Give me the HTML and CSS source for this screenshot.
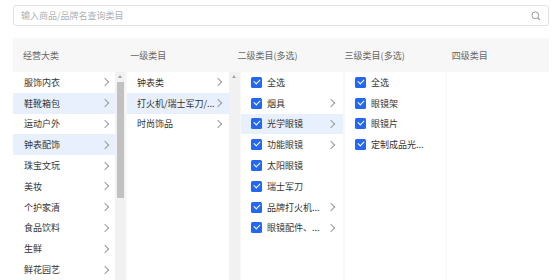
FILE: index.html
```html
<!DOCTYPE html>
<html>
<head>
<meta charset="utf-8">
<link rel="stylesheet" href="styles.css">
</head>
<body>
<div class="wrap">
  <div class="search">
    <span class="ph">输入商品/品牌名查询类目</span>
    <svg class="sicon" width="10" height="10" viewBox="0 0 10 10"><circle cx="4.3" cy="4.3" r="3.4" fill="none" stroke="#999" stroke-width="1"/><path d="M6.8 6.8 L9 9" stroke="#999" stroke-width="1.1"/></svg>
  </div>
  <div class="panel">
    <div class="heads">
      <div class="h">经营大类</div>
      <div class="h">一级类目</div>
      <div class="h">二级类目(多选)</div>
      <div class="h">三级类目(多选)</div>
      <div class="h">四级类目</div>
    </div>
    <div class="cols">
      <div class="col c1">
        <div class="row"><span class="t">服饰内衣</span><i class="chev"></i></div>
        <div class="row on"><span class="t">鞋靴箱包</span><i class="chev"></i></div>
        <div class="row"><span class="t">运动户外</span><i class="chev"></i></div>
        <div class="row on"><span class="t">钟表配饰</span><i class="chev"></i></div>
        <div class="row"><span class="t">珠宝文玩</span><i class="chev"></i></div>
        <div class="row"><span class="t">美妆</span><i class="chev"></i></div>
        <div class="row"><span class="t">个护家清</span><i class="chev"></i></div>
        <div class="row"><span class="t">食品饮料</span><i class="chev"></i></div>
        <div class="row"><span class="t">生鲜</span><i class="chev"></i></div>
        <div class="row"><span class="t">鲜花园艺</span><i class="chev"></i></div>
      </div>
      <div class="sb sb1"><i class="up"></i><div class="thumb"></div></div>
      <div class="col c2">
        <div class="row"><span class="t">钟表类</span><i class="chev"></i></div>
        <div class="row on"><span class="t">打火机/瑞士军刀/...</span><i class="chev"></i></div>
        <div class="row"><span class="t">时尚饰品</span><i class="chev"></i></div>
      </div>
      <div class="sb sb2"><i class="up"></i></div>
      <div class="col c3">
        <div class="row"><i class="cb"></i><span class="t">全选</span></div>
        <div class="row"><i class="cb"></i><span class="t">烟具</span><i class="chev"></i></div>
        <div class="row on"><i class="cb"></i><span class="t">光学眼镜</span><i class="chev"></i></div>
        <div class="row"><i class="cb"></i><span class="t">功能眼镜</span><i class="chev"></i></div>
        <div class="row"><i class="cb"></i><span class="t">太阳眼镜</span></div>
        <div class="row"><i class="cb"></i><span class="t">瑞士军刀</span></div>
        <div class="row"><i class="cb"></i><span class="t">品牌打火机...</span><i class="chev"></i></div>
        <div class="row"><i class="cb"></i><span class="t">眼镜配件、...</span><i class="chev"></i></div>
      </div>
      <div class="col c4">
        <div class="row"><i class="cb"></i><span class="t">全选</span></div>
        <div class="row"><i class="cb"></i><span class="t">眼镜架</span></div>
        <div class="row"><i class="cb"></i><span class="t">眼镜片</span></div>
        <div class="row"><i class="cb"></i><span class="t">定制成品光...</span></div>
      </div>
      <div class="col c5"></div>
    </div>
  </div>
</div>
</body>
</html>
```

FILE: styles.css
```css
html, body {
  margin: 0;
  padding: 0;
  overflow: hidden;
  background: #fff;
}
body {
  font-family: "Noto Sans CJK SC", "Noto Sans", sans-serif;
  font-size: 9px;
  color: #333;
}
.wrap {
  padding: 5px 4px 0 13px;
}
.search {
  height: 19px;
  border: 1px solid #e2e2e2;
  border-radius: 3px;
  display: flex;
  align-items: center;
  justify-content: space-between;
  padding: 0 7px 0 7px;
}
.ph {
  color: #b0b0b0;
  font-size: 9px;
}
.sicon {
  display: block;
}
.panel {
  margin-top: 12px;
  background: #f7f7f7;
}
.heads {
  height: 34px;
  display: grid;
  grid-template-columns: repeat(5, 1fr);
  align-items: center;
}
.h {
  padding-left: 10px;
  color: #666;
  padding-top: 1px;
}
.cols {
  display: flex;
  height: 220px;
  align-items: stretch;
}
.col {
  background: #fff;
  overflow: hidden;
}
.c1 { width: 102px; }
.c2 { width: 102px; margin-left: 2px; }
.c3 { width: 102px; margin-left: 1px; }
.c4 { width: 101px; margin-left: 2px; }
.c5 { width: 102px; margin-left: 1px; }
.row {
  height: 20.8px;
  display: flex;
  align-items: center;
  padding-left: 11px;
  padding-right: 5px;
  white-space: nowrap;
}
.c2 .row { padding-left: 10px; padding-right: 6px; }
.c3 .row, .c4 .row { padding-left: 10px; padding-right: 7px; }
.row.on {
  background: #e8f0fd;
}
.t {
  flex: 1;
  min-width: 0;
  overflow: hidden;
}
.chev {
  width: 5px;
  height: 5px;
  border-right: 1px solid #9a9a9a;
  border-top: 1px solid #9a9a9a;
  transform: rotate(45deg);
  margin-right: 2px;
  flex: none;
}
.cb {
  width: 11px;
  height: 11px;
  border-radius: 1.5px;
  background: #2468f2;
  margin-right: 5px;
  flex: none;
  position: relative;
}
.cb::after {
  content: "";
  position: absolute;
  left: 3px;
  top: 2px;
  width: 5px;
  height: 3px;
  border-left: 1.3px solid #fff;
  border-bottom: 1.3px solid #fff;
  transform: rotate(-45deg);
}
.sb {
  background: #f1f1f1;
  position: relative;
  flex: none;
}
.sb1 { width: 10px; }
.sb2 { width: 11px; }
.up {
  position: absolute;
  top: 3px;
  left: 50%;
  margin-left: -2.5px;
  width: 0;
  height: 0;
  border-left: 2.5px solid transparent;
  border-right: 2.5px solid transparent;
  border-bottom: 3px solid #a3a3a3;
}
.thumb {
  position: absolute;
  left: 2px;
  right: 1px;
  top: 10px;
  height: 116px;
  background: #c1c1c1;
}
```
